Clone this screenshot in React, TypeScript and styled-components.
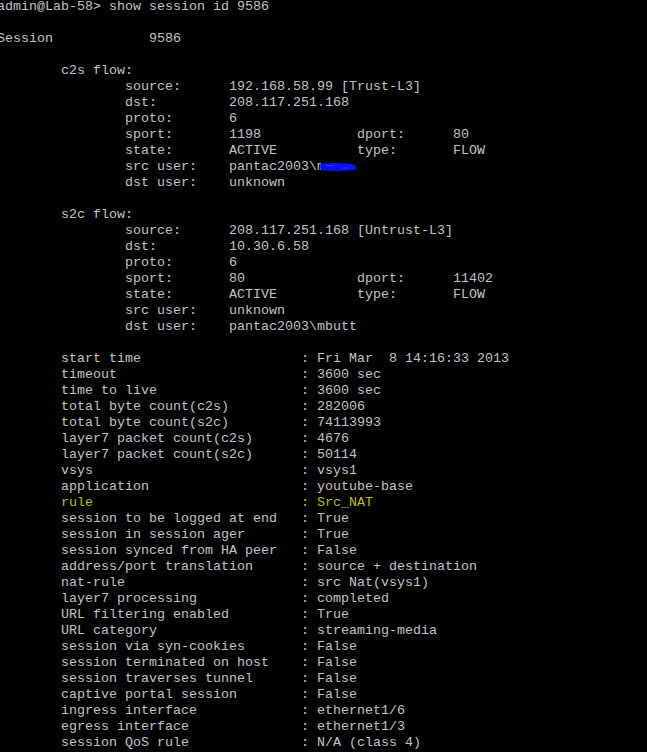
import React from "react";
import styled, { createGlobalStyle } from "styled-components";

const Global = createGlobalStyle`
  html, body {
    margin: 0;
    padding: 0;
    background: #000;
    overflow: hidden;
    height: 752px;
  }
`;

const Screen = styled.div`
  width: 647px;
  height: 752px;
  overflow: hidden;
  background: #000;
`;

const Text = styled.pre`
  margin: -1px 0 0 -3px;
  font-family: "Liberation Mono", "Courier New", monospace;
  font-size: 13.333px;
  line-height: 16px;
  color: #c4c4c4;
  white-space: pre;
`;

const Line = styled.div<{ $tone?: "normal" | "yellow" }>`
  height: 16px;
  color: ${(p) => (p.$tone === "yellow" ? "#bcbc1c" : "#c4c4c4")};
`;

const Redacted = styled.span`
  display: inline-block;
  position: relative;
  width: 8px;
  height: 16px;
  vertical-align: top;
  overflow: visible;
`;

const Partial = styled.span`
  display: inline-block;
  width: 4px;
  overflow: hidden;
  vertical-align: top;
`;

const Scribble = styled.svg`
  position: absolute;
  left: 3px;
  top: 3px;
  width: 38px;
  height: 10px;
  overflow: visible;
`;

const Cursor = styled.span`
  display: inline-block;
  width: 7px;
  height: 14px;
  margin-top: 1px;
  box-sizing: border-box;
  border: 1px solid #00c000;
  vertical-align: top;
`;

type Seg = [number, string];

const pad = (segs: Seg[]) => {
  let s = "";
  for (const [col, t] of segs) {
    while (s.length < col) s += " ";
    s += t;
  }
  return s;
};

const flow = (name: string, rows: { k: string; v: string; k2?: string; v2?: string }[]) => [
  pad([[8, `${name} flow:`]]),
  ...rows.map((r) =>
    pad(
      r.k2
        ? [
            [16, r.k],
            [29, r.v],
            [45, r.k2],
            [57, r.v2 || ""],
          ]
        : [
            [16, r.k],
            [29, r.v],
          ]
    )
  ),
];

const attrs: [string, string][] = [
  ["start time", "Fri Mar  8 14:16:33 2013"],
  ["timeout", "3600 sec"],
  ["time to live", "3600 sec"],
  ["total byte count(c2s)", "282006"],
  ["total byte count(s2c)", "74113993"],
  ["layer7 packet count(c2s)", "4676"],
  ["layer7 packet count(s2c)", "50114"],
  ["vsys", "vsys1"],
  ["application", "youtube-base"],
  ["rule", "Src_NAT"],
  ["session to be logged at end", "True"],
  ["session in session ager", "True"],
  ["session synced from HA peer", "False"],
  ["address/port translation", "source + destination"],
  ["nat-rule", "src Nat(vsys1)"],
  ["layer7 processing", "completed"],
  ["URL filtering enabled", "True"],
  ["URL category", "streaming-media"],
  ["session via syn-cookies", "False"],
  ["session terminated on host", "False"],
  ["session traverses tunnel", "False"],
  ["captive portal session", "False"],
  ["ingress interface", "ethernet1/6"],
  ["egress interface", "ethernet1/3"],
  ["session QoS rule", "N/A (class 4)"],
];

const c2s = flow("c2s", [
  { k: "source:", v: "192.168.58.99 [Trust-L3]" },
  { k: "dst:", v: "208.117.251.168" },
  { k: "proto:", v: "6" },
  { k: "sport:", v: "1198", k2: "dport:", v2: "80" },
  { k: "state:", v: "ACTIVE", k2: "type:", v2: "FLOW" },
]);

const s2c = flow("s2c", [
  { k: "source:", v: "208.117.251.168 [Untrust-L3]" },
  { k: "dst:", v: "10.30.6.58" },
  { k: "proto:", v: "6" },
  { k: "sport:", v: "80", k2: "dport:", v2: "11402" },
  { k: "state:", v: "ACTIVE", k2: "type:", v2: "FLOW" },
  { k: "src user:", v: "unknown" },
  { k: "dst user:", v: "pantac2003\\mbutt" },
]);

export default function App() {
  return (
    <Screen>
      <Global />
      <Text>
        <Line>admin@Lab-58&gt; show session id 9586</Line>
        <Line> </Line>
        <Line>{pad([[0, "Session"], [19, "9586"]])}</Line>
        <Line> </Line>
        {c2s.map((l, i) => (
          <Line key={`c${i}`}>{l}</Line>
        ))}
        <Line>
          {pad([[16, "src user:"], [29, "pantac2003\\"]])}
          <Redacted>
            <Partial>m</Partial>
            <Scribble viewBox="0 0 38 10">
              <path
                d="M0 2 L8 1.2 L18 1 L27 1.6 L34 2.4 L36 4 L37 7.5 L30 8.6 L20 9 L10 8.8 L1 8.2 L0.5 5 Z"
                fill="#0a10f5"
              />
              <path d="M6 3.6 L14 3.3 M22 6.2 L28 6" stroke="#3040ff" strokeWidth="0.8" fill="none" />
            </Scribble>
          </Redacted>
        </Line>
        <Line>{pad([[16, "dst user:"], [29, "unknown"]])}</Line>
        <Line> </Line>
        {s2c.map((l, i) => (
          <Line key={`s${i}`}>{l}</Line>
        ))}
        <Line> </Line>
        {attrs.map(([k, v]) => (
          <Line key={k} $tone={k === "rule" ? "yellow" : "normal"}>
            {pad([[8, k], [38, ": " + v]])}
          </Line>
        ))}
        <Line>
          {"admin@Lab-58> "}
          <Cursor />
        </Line>
      </Text>
    </Screen>
  );
}
